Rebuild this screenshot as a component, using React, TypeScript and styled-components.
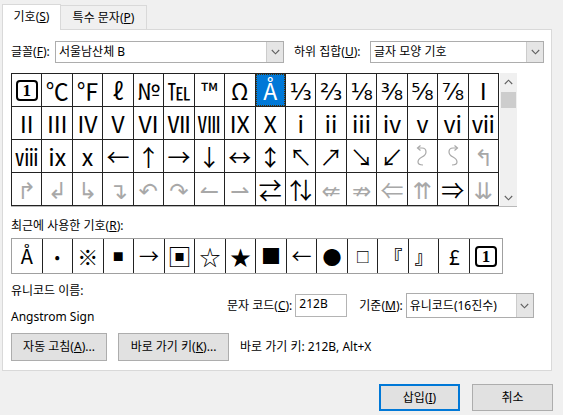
import React from 'react'
import styled, { createGlobalStyle } from 'styled-components'

const GlobalStyle = createGlobalStyle`
  html, body {
    margin: 0;
    padding: 0;
    background: #f0f0f0;
  }
  body {
    font-family: 'Noto Sans', 'Noto Sans CJK KR', sans-serif;
    font-size: 12px;
    color: #000;
  }
`

const Dialog = styled.div`
  width: 563px;
  height: 415px;
  box-sizing: border-box;
  padding: 4px 0 0 2px;
  display: flex;
  flex-direction: column;
  overflow: hidden;
`

const TabStrip = styled.div`
  display: flex;
  align-items: flex-end;
  height: 26px;
  position: relative;
  z-index: 1;
`

const Tab = styled.div<{ $active?: boolean }>`
  box-sizing: border-box;
  display: flex;
  align-items: center;
  justify-content: center;
  line-height: 14px;
  border: 1px solid #d9d9d9;
  border-bottom: none;
  ${({ $active }) =>
    $active
      ? `
    width: 59px;
    height: 26px;
    background: #fff;
    padding-bottom: 2px;
  `
      : `
    width: 86px;
    height: 24px;
    margin-bottom: 1px;
    background: #f0f0f0;
    border-left: none;
  `}
`

const Panel = styled.div`
  box-sizing: border-box;
  width: 550px;
  height: 342px;
  margin-top: -1px;
  background: #fff;
  border: 1px solid #d9d9d9;
  padding: 11px 0 0 8px;
  display: flex;
  flex-direction: column;
`

const FontRow = styled.div`
  display: flex;
  align-items: center;
  height: 22px;
`

const Label = styled.span<{ $w?: number }>`
  line-height: 14px;
  white-space: nowrap;
  ${({ $w }) => ($w ? `width: ${$w}px;` : '')}
`

const Combo = styled.div<{ $w: number; $h?: number }>`
  box-sizing: border-box;
  width: ${({ $w }) => $w}px;
  height: ${({ $h }) => $h ?? 22}px;
  border: 1px solid #adadad;
  background: #fff;
  display: flex;
  align-items: stretch;
`

const ComboText = styled.div`
  flex: 1;
  display: flex;
  align-items: center;
  padding-left: 3px;
  line-height: 14px;
  white-space: nowrap;
`

const ComboButton = styled.div`
  width: 16px;
  background: #e5e5e5;
  border-left: 1px solid #cccccc;
  display: flex;
  align-items: center;
  justify-content: center;
`

const GridBox = styled.div`
  display: flex;
  margin-top: 10px;
  width: 506px;
  border-bottom: 1px solid #b9b9b9;
`

const SymbolGrid = styled.div`
  box-sizing: border-box;
  width: 488px;
  display: grid;
  grid-template-columns: repeat(16, 1fr);
  grid-auto-rows: 32px;
  gap: 1px;
  padding: 1px;
  background: #222;
`

const Cell = styled.div<{ $sel?: boolean; $light?: boolean; $size?: number; $bold?: boolean }>`
  display: flex;
  align-items: center;
  justify-content: center;
  overflow: hidden;
  font-family: 'Noto Sans CJK KR', 'DejaVu Sans', sans-serif;
  font-size: ${({ $size }) => $size ?? 23}px;
  font-weight: ${({ $bold }) => ($bold ? 'bold' : 'normal')};
  line-height: 1;
  background: ${({ $sel }) => ($sel ? '#0078d7' : '#fff')};
  color: ${({ $sel, $light }) => ($sel ? '#fff' : $light ? '#a8a8a8' : '#000')};
  ${({ $sel }) => ($sel ? 'outline: 1px dotted #4a3000; outline-offset: -1px;' : '')}
`

const BoxedOne = styled.span`
  box-sizing: border-box;
  width: 22px;
  height: 21px;
  border: 2px solid #000;
  border-radius: 4px;
  display: flex;
  align-items: center;
  justify-content: center;
  font-family: 'Liberation Serif', serif;
  font-weight: bold;
  font-size: 17px;
  line-height: 1;
`

const ScrollBar = styled.div`
  width: 17px;
  margin-left: 1px;
  background: #f0f0f0;
  display: flex;
  flex-direction: column;
`

const ScrollArrow = styled.div`
  height: 17px;
  display: flex;
  align-items: center;
  justify-content: center;
`

const ScrollTrack = styled.div`
  flex: 1;
  padding: 2px 1px 0;
`

const Thumb = styled.div`
  height: 16px;
  background: #cdcdcd;
`

const RecentLabel = styled(Label)`
  margin-top: 12px;
`

const RecentRow = styled.div`
  box-sizing: border-box;
  margin-top: 5px;
  width: 492px;
  height: 36px;
  display: grid;
  grid-template-columns: repeat(15, 1fr) 32px;
  gap: 1px;
  background: #222;
  border: 1px solid #a0a0a0;
`

const InfoSection = styled.div`
  display: flex;
  margin-top: 10px;
  height: 40px;
`

const NameColumn = styled.div`
  width: 216px;
  display: flex;
  flex-direction: column;
`

const NameValue = styled(Label)`
  margin-top: 12px;
`

const CodeRow = styled.div`
  display: flex;
  align-items: center;
  margin-top: 9px;
  height: 25px;
`

const CodeInput = styled.div`
  box-sizing: border-box;
  width: 52px;
  height: 23px;
  margin-left: 3px;
  border: 1px solid #b4b4b4;
  padding: 2px 0 0 3px;
  line-height: 14px;
  background: #fff;
`

const ButtonRow = styled.div`
  display: flex;
  align-items: center;
  margin-top: 9px;
  gap: 11px;
`

const Button = styled.div<{ $w: number; $default?: boolean }>`
  box-sizing: border-box;
  width: ${({ $w }) => $w}px;
  height: ${({ $default }) => ($default !== undefined ? 27 : 28)}px;
  background: #e1e1e1;
  border: ${({ $default }) => ($default ? '2px solid #0078d7' : '1px solid #adadad')};
  display: flex;
  align-items: center;
  justify-content: center;
  line-height: 14px;
  white-space: nowrap;
`

const Footer = styled.div`
  display: flex;
  justify-content: flex-end;
  gap: 12px;
  margin-top: 13px;
  padding-right: 10px;
`

const Chevron = ({ up }: { up?: boolean }) => (
  <svg width="9" height="6" viewBox="0 0 9 6">
    <polyline
      points={up ? '0.8,5 4.5,1.2 8.2,5' : '0.8,1 4.5,4.8 8.2,1'}
      fill="none"
      stroke="#606060"
      strokeWidth="1.1"
    />
  </svg>
)

const Squiggle = ({ flip }: { flip?: boolean }) => (
  <svg width="20" height="26" viewBox="0 0 20 26">
    <g
      fill="none"
      stroke="#a8a8a8"
      strokeWidth="1.2"
      transform={flip ? 'translate(20,0) scale(-1,1)' : undefined}
    >
      <path d="M6 5 L10 5 Q14 5 14 9 Q14 12 10 14 Q6 16 6 19 Q6 22 11 22" />
      <path d="M8.5 2.5 L5.5 5 L8.5 7.5" />
    </g>
  </svg>
)

type Sym = {
  ch?: string
  light?: boolean
  sel?: boolean
  boxed?: boolean
  bold?: boolean
  size?: number
  squiggle?: 'l' | 'r'
}

const L = (ch: string): Sym => ({ ch, light: true })

const symbols: Sym[] = [
  { boxed: true },
  ...'℃℉ℓ№℡™Ω'.split('').map((ch) => ({ ch })),
  { ch: 'Å', sel: true },
  ...'⅓⅔⅛⅜⅝⅞Ⅰ'.split('').map((ch) => ({ ch })),
  ...'ⅡⅢⅣⅤⅥⅦⅧⅨⅩⅰⅱⅲⅳⅴⅵⅶ'.split('').map((ch) => ({ ch })),
  ...'ⅷⅸⅹ←↑→↓↔↕↖↗↘↙'.split('').map((ch) => ({ ch })),
  { squiggle: 'l' },
  { squiggle: 'r' },
  L('↰'),
  L('↱'),
  L('↲'),
  L('↳'),
  L('↴'),
  L('↶'),
  L('↷'),
  L('↼'),
  L('⇀'),
  { ch: '⇄' },
  { ch: '⇅' },
  L('⇍'),
  L('⇏'),
  L('⇐'),
  L('⇈'),
  { ch: '⇒' },
  L('⇊'),
]

const recent: Sym[] = [
  { ch: 'Å', size: 20 },
  { ch: '•', size: 16 },
  { ch: '※', size: 21 },
  { ch: '■', size: 11 },
  { ch: '→', size: 20 },
  { ch: '▣', size: 24 },
  { ch: '☆', size: 21 },
  { ch: '★', size: 21 },
  { ch: '■', size: 20 },
  { ch: '←', size: 20 },
  { ch: '●', size: 19 },
  { ch: '□', size: 14, bold: true },
  { ch: '『', size: 18, bold: true },
  { ch: '』', size: 18, bold: true },
  { ch: '£', size: 21 },
  { boxed: true },
]

const renderSym = (s: Sym, i: number) => (
  <Cell key={i} $sel={s.sel} $light={s.light} $size={s.size} $bold={s.bold}>
    {s.boxed ? <BoxedOne>1</BoxedOne> : s.squiggle ? <Squiggle flip={s.squiggle === 'r'} /> : s.ch}
  </Cell>
)

export default function App() {
  return (
    <>
      <GlobalStyle />
      <Dialog>
        <TabStrip>
          <Tab $active>
            기호(<u>S</u>)
          </Tab>
          <Tab>
            특수 문자(<u>P</u>)
          </Tab>
        </TabStrip>
        <Panel>
          <FontRow>
            <Label $w={44}>
              글꼴(<u>F</u>):
            </Label>
            <Combo $w={229}>
              <ComboText>서울남산체 B</ComboText>
              <ComboButton>
                <Chevron />
              </ComboButton>
            </Combo>
            <Label $w={76} style={{ marginLeft: 10 }}>
              하위 집합(<u>U</u>):
            </Label>
            <Combo $w={174}>
              <ComboText>글자 모양 기호</ComboText>
              <ComboButton>
                <Chevron />
              </ComboButton>
            </Combo>
          </FontRow>

          <GridBox>
            <SymbolGrid>{symbols.map(renderSym)}</SymbolGrid>
            <ScrollBar>
              <ScrollArrow>
                <Chevron up />
              </ScrollArrow>
              <ScrollTrack>
                <Thumb />
              </ScrollTrack>
              <ScrollArrow>
                <Chevron />
              </ScrollArrow>
            </ScrollBar>
          </GridBox>

          <RecentLabel>
            최근에 사용한 기호(<u>R</u>):
          </RecentLabel>
          <RecentRow>{recent.map(renderSym)}</RecentRow>

          <InfoSection>
            <NameColumn>
              <Label>유니코드 이름:</Label>
              <NameValue>Angstrom Sign</NameValue>
            </NameColumn>
            <CodeRow>
              <Label>
                문자 코드(<u>C</u>):
              </Label>
              <CodeInput>212B</CodeInput>
              <Label style={{ marginLeft: 12 }}>
                기준(<u>M</u>):
              </Label>
              <Combo $w={128} $h={25} style={{ marginLeft: 3 }}>
                <ComboText>유니코드(16진수)</ComboText>
                <ComboButton>
                  <Chevron />
                </ComboButton>
              </Combo>
            </CodeRow>
          </InfoSection>

          <ButtonRow>
            <Button $w={96}>
              자동 고침(<u>A</u>)...
            </Button>
            <Button $w={111}>
              바로 가기 키(<u>K</u>)...
            </Button>
            <Label>바로 가기 키: 212B, Alt+X</Label>
          </ButtonRow>
        </Panel>
        <Footer>
          <Button $w={81} $default>
            삽입(<u>I</u>)
          </Button>
          <Button $w={81} $default={false}>
            취소
          </Button>
        </Footer>
      </Dialog>
    </>
  )
}
